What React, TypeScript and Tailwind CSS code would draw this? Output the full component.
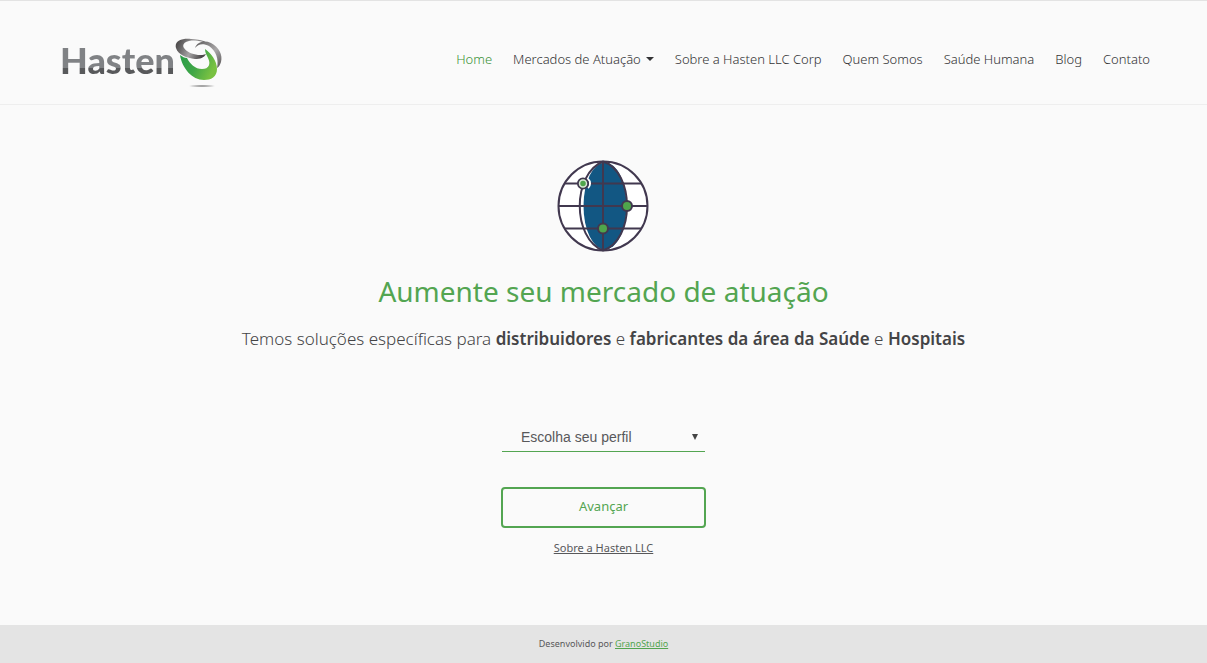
const navLinks = [
  { label: "Home", active: true },
  { label: "Mercados de Atuação", menu: true },
  { label: "Sobre a Hasten LLC Corp" },
  { label: "Quem Somos" },
  { label: "Saúde Humana" },
  { label: "Blog" },
  { label: "Contato" },
];

function LogoMark() {
  return (
    <svg viewBox="0 0 48 50" className="h-[50px] w-12" aria-hidden="true">
      <defs>
        <linearGradient id="silver" x1="0" y1="0" x2="1" y2="0.3">
          <stop offset="0" stopColor="#3f3c3d" />
          <stop offset=".3" stopColor="#6d6b6c" />
          <stop offset=".6" stopColor="#a5a3a4" />
          <stop offset="1" stopColor="#4a4748" />
        </linearGradient>
        <linearGradient id="ring" x1="0" y1="0" x2="1" y2="1">
          <stop offset="0" stopColor="#5c5a5b" />
          <stop offset=".55" stopColor="#a9a7a8" />
          <stop offset="1" stopColor="#555253" />
        </linearGradient>
        <linearGradient id="leaf" x1="0" y1="0" x2="1" y2="0.4">
          <stop offset="0" stopColor="#259b49" />
          <stop offset=".55" stopColor="#3fa647" />
          <stop offset="1" stopColor="#79c142" />
        </linearGradient>
        <radialGradient id="shade">
          <stop offset="0" stopColor="#777" />
          <stop offset="1" stopColor="#777" stopOpacity="0" />
        </radialGradient>
      </defs>
      <ellipse cx="27" cy="48" rx="14" ry="1.4" fill="url(#shade)" />
      <path fill="url(#silver)" d="M1 10C-1 3 7 0 16 1c6 0 12 1 16 4-6-2-12-3-18-2C9 4 7 7 9 10c3 4 8 6 14 7 3 0 6 0 8-1-2 4-6 5-11 5C12 20 3 17 1 10Z" />
      <path fill="url(#ring)" d="M20 10c2-6 9-8 16-5 8 4 12 12 10 19-1 3-2 5-4 6 2-9-1-17-8-22-6-3-11-2-14 2Z" />
      <path fill="url(#leaf)" d="M5 17c3 2 4 3 7 3 3 6 8 11 15 11 7 0 9-5 6-11-2-4-3-6-3-9 6 4 12 12 12 20 0 8-6 11-13 11C17 42 7 30 5 17Z" />
    </svg>
  );
}

function GlobeIcon() {
  return (
    <svg viewBox="0 0 93 92" className="h-[92px] w-[93px]" fill="none" stroke="#41384f" strokeWidth="2" aria-hidden="true">
      <circle cx="46" cy="46" r="44.5" fill="#fff" />
      <ellipse cx="48" cy="46" rx="21.5" ry="43.5" fill="#125783" stroke="none" />
      <path d="M46 1.5C15 14 15 78 46 90.5M46 1.5c32 10 32 79 0 89" />
      <path d="M46 1.5v89M1.5 46h89M8 23.5h76M8 68.5h76" />
      <path d="M31 19a6 6 0 0 1 0 9" stroke="#fff" />
      <circle cx="26" cy="23.5" r="5" fill="#4fa64b" />
      <circle cx="26" cy="23.5" r="3.5" stroke="#d7e5d5" strokeWidth="1.5" />
      <circle cx="70" cy="46" r="5" fill="#4fa64b" />
      <circle cx="46" cy="68.5" r="5" fill="#4fa64b" />
    </svg>
  );
}

export default function App() {
  return (
    <div className="flex min-h-screen flex-col border-t border-[#e3e3e3] bg-[#fafafa] font-['Noto_Sans',sans-serif] text-[#58585a]">
      <header className="flex h-26 items-center justify-between border-b border-[#eeeeee] pr-[57px] pl-[60px]">
        <a href="#" aria-label="Hasten" className="flex items-start pt-5">
          <span className="bg-linear-to-b from-[#808285] from-68% to-[#58595b] to-68% bg-clip-text font-['Lato',sans-serif] text-4xl leading-11 font-black text-transparent">
            Hasten
          </span>
          <LogoMark />
        </a>
        <nav aria-label="Principal" className="pt-3">
          <ul className="flex gap-[21px] text-[13px] leading-5 font-light whitespace-nowrap text-[#333335]">
            {navLinks.map((link) => (
              <li key={link.label}>
                <a href="#" className={link.active ? "text-[#3a9238]" : "flex items-center gap-[5px]"}>
                  {link.label}
                  {link.menu && (
                    <svg viewBox="0 0 8 4" className="h-1 w-2" fill="currentColor" aria-hidden="true">
                      <path d="M0 0h8L4 4z" />
                    </svg>
                  )}
                </a>
              </li>
            ))}
          </ul>
        </nav>
      </header>

      <main className="flex flex-1 flex-col items-center pt-[55px]">
        <GlobeIcon />
        <h1 className="mt-[19px] text-center text-[28px] leading-10 text-[#53a551]">Aumente seu mercado de atuação</h1>
        <p className="mt-4 text-center text-[17px] leading-6 font-light text-[#444446]">
          Temos soluções específicas para <strong className="font-semibold">distribuidores</strong> e{" "}
          <strong className="font-semibold">fabricantes da área da Saúde</strong> e <strong className="font-semibold">Hospitais</strong>
        </p>
        <form className="mt-18 flex w-[205px] flex-col items-center" onSubmit={(e) => e.preventDefault()}>
          <div className="grid w-[203px] items-center border-b border-[#53a551]">
            <select
              aria-label="Escolha seu perfil"
              className="col-start-1 row-start-1 h-7 w-full appearance-none bg-transparent pr-6 pl-[19px] font-['Liberation_Sans',sans-serif] text-sm"
            >
              <option>Escolha seu perfil</option>
              <option>Distribuidor</option>
              <option>Fabricante</option>
              <option>Hospital</option>
            </select>
            <svg viewBox="0 0 6 6" className="pointer-events-none col-start-1 row-start-1 mr-[7px] size-[6px] justify-self-end" aria-hidden="true">
              <path d="M0 0h6L3 6z" fill="#444" />
            </svg>
          </div>
          <button className="mt-[35px] h-[41px] w-full rounded-sm border-2 border-[#53a551] pb-[2px] text-[13px] text-[#53a551]">
            Avançar
          </button>
          <a href="#" className="mt-3 text-[11px] leading-4 underline">Sobre a Hasten LLC</a>
        </form>
      </main>

      <footer className="flex h-[38px] items-center justify-center bg-[#e4e4e4] text-[9px]">
        <p>
          Desenvolvido por <a href="#" className="text-[#53a551] underline">GranoStudio</a>
        </p>
      </footer>
    </div>
  );
}
